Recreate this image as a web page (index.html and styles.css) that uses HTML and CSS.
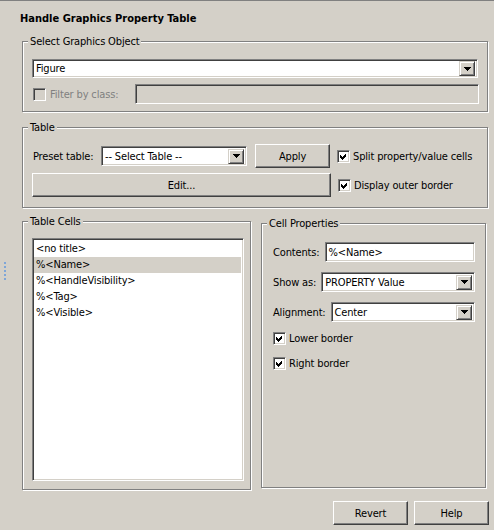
FILE: index.html
```html
<!DOCTYPE html>
<html>
<head>
<meta charset="utf-8">
<link rel="stylesheet" href="styles.css">
</head>
<body>
<div class="window">
  <div class="grip"><i></i><i></i><i></i><i></i><i></i></div>
  <div class="title">Handle Graphics Property Table</div>

  <fieldset class="group g-object">
    <legend>Select Graphics Object</legend>
    <div class="combo wide"><span class="val">Figure</span><span class="drop"><svg width="7" height="4" viewBox="0 0 7 4"><polygon points="0,0 7,0 3.5,4" fill="#000"/></svg></span></div>
    <div class="filter-row">
      <span class="check disabled"></span>
      <span class="lbl dis">Filter by class:</span>
      <span class="field disabled-field"></span>
    </div>
  </fieldset>

  <fieldset class="group g-table">
    <legend>Table</legend>
    <div class="trow">
      <span class="lbl preset">Preset table:</span>
      <div class="combo preset-combo"><span class="val">-- Select Table --</span><span class="drop"><svg width="7" height="4" viewBox="0 0 7 4"><polygon points="0,0 7,0 3.5,4" fill="#000"/></svg></span></div>
      <button class="btn apply">Apply</button>
      <span class="check on"><svg width="9" height="9" viewBox="0 0 9 9"><polygon points="1,3 3,5 7,1 7,4 3,8 1,6" fill="#000"/></svg></span>
      <span class="lbl">Split property/value cells</span>
    </div>
    <div class="trow r2">
      <button class="btn edit">Edit...</button>
      <span class="check on"><svg width="9" height="9" viewBox="0 0 9 9"><polygon points="1,3 3,5 7,1 7,4 3,8 1,6" fill="#000"/></svg></span>
      <span class="lbl">Display outer border</span>
    </div>
  </fieldset>

  <div class="lower">
    <fieldset class="group g-cells">
      <legend>Table Cells</legend>
      <ul class="list">
        <li>&lt;no title&gt;</li>
        <li class="sel">%&lt;Name&gt;</li>
        <li>%&lt;HandleVisibility&gt;</li>
        <li>%&lt;Tag&gt;</li>
        <li>%&lt;Visible&gt;</li>
      </ul>
    </fieldset>

    <fieldset class="group g-props">
      <legend>Cell Properties</legend>
      <div class="prow">
        <span class="lbl">Contents:</span>
        <span class="field"><span class="val">%&lt;Name&gt;</span></span>
      </div>
      <div class="prow">
        <span class="lbl">Show as:</span>
        <div class="combo"><span class="val">PROPERTY Value</span><span class="drop"><svg width="7" height="4" viewBox="0 0 7 4"><polygon points="0,0 7,0 3.5,4" fill="#000"/></svg></span></div>
      </div>
      <div class="prow">
        <span class="lbl">Alignment:</span>
        <div class="combo"><span class="val">Center</span><span class="drop"><svg width="7" height="4" viewBox="0 0 7 4"><polygon points="0,0 7,0 3.5,4" fill="#000"/></svg></span></div>
      </div>
      <div class="crow first">
        <span class="check on"><svg width="9" height="9" viewBox="0 0 9 9"><polygon points="1,3 3,5 7,1 7,4 3,8 1,6" fill="#000"/></svg></span>
        <span class="lbl">Lower border</span>
      </div>
      <div class="crow">
        <span class="check on"><svg width="9" height="9" viewBox="0 0 9 9"><polygon points="1,3 3,5 7,1 7,4 3,8 1,6" fill="#000"/></svg></span>
        <span class="lbl">Right border</span>
      </div>
    </fieldset>
  </div>

  <div class="buttons">
    <button class="btn">Revert</button>
    <button class="btn">Help</button>
  </div>
</div>
</body>
</html>
```

FILE: styles.css
```css
html, body {
  margin: 0;
  padding: 0;
  background: #d4d0c8;
}
body {
  font-family: "DejaVu Sans Condensed", "Liberation Sans", Arial, sans-serif;
  font-size: 11px;
  line-height: 13px;
  letter-spacing: -0.15px;
  color: #000;
}
.window {
  position: relative;
  width: 494px;
  height: 530px;
  box-sizing: border-box;
  border-top: 1px solid #808080;
  padding: 0 6px 0 22px;
  display: flex;
  flex-direction: column;
  overflow: hidden;
}
.grip {
  position: absolute;
  left: 4px;
  top: 261px;
  display: flex;
  flex-direction: column;
  gap: 2px;
}
.grip i {
  display: block;
  width: 2px;
  height: 2px;
  background: #7fa6d8;
}
.title {
  margin: 11px 0 0 -2px;
  font-weight: bold;
  letter-spacing: 0;
  height: 13px;
}
.group {
  margin: 0;
  padding: 0;
  border: 1px solid #808080;
  box-shadow: inset 1px 1px 0 #fff, 1px 1px 0 #fff;
  min-width: 0;
}
.group legend {
  padding: 0 2px;
  margin-left: -4px;
  background: #d4d0c8;
  line-height: 13px;
  height: 13px;
}
.g-object {
  margin-top: 10px;
  padding: 11px 9px 7px 9px;
}
.combo, .field {
  box-sizing: border-box;
  height: 19px;
  border: 1px solid;
  border-color: #808080 #fff #fff #808080;
  box-shadow: inset 1px 1px 0 #404040, inset -1px -1px 0 #d4d0c8;
  background: #fff;
  display: flex;
  align-items: center;
  padding: 2px;
}
.combo .val, .field .val {
  flex: 1;
  padding-left: 1px;
  white-space: nowrap;
  overflow: hidden;
}
.drop {
  box-sizing: border-box;
  width: 16px;
  height: 15px;
  background: #d4d0c8;
  border: 1px solid;
  border-color: #d4d0c8 #404040 #404040 #d4d0c8;
  box-shadow: inset 1px 1px 0 #fff, inset -1px -1px 0 #808080;
  display: flex;
  align-items: center;
  justify-content: center;
}
.drop svg { display: block; shape-rendering: crispEdges; }
.filter-row {
  margin-top: 6px;
  display: flex;
  align-items: center;
  height: 20px;
}
.filter-row .check { margin-left: 1px; }
.filter-row .lbl { margin-left: 4px; width: 85px; }
.dis { color: #808080; }
.disabled-field {
  flex: 1;
  height: 20px;
  background: #d4d0c8;
  margin-right: -1px;
}
.check {
  box-sizing: border-box;
  flex: none;
  width: 13px;
  height: 13px;
  border: 1px solid;
  border-color: #808080 #fff #fff #808080;
  box-shadow: inset 1px 1px 0 #404040, inset -1px -1px 0 #d4d0c8;
  background: #fff;
  display: flex;
  align-items: center;
  justify-content: center;
}
.check.disabled { background: #d4d0c8; }
.check svg { display: block; shape-rendering: crispEdges; }
.g-table {
  margin-top: 9px;
  padding: 10px 9px 10px 9px;
}
.trow {
  display: flex;
  align-items: center;
  height: 24px;
}
.trow.r2 { margin-top: 5px; }
.preset { margin-left: 1px; width: 68px; }
.preset-combo {
  width: 146px;
  height: 20px;
}
.btn {
  box-sizing: border-box;
  width: 75px;
  height: 24px;
  font: inherit;
  letter-spacing: inherit;
  color: #000;
  background: #d4d0c8;
  border: 1px solid;
  border-color: #fff #404040 #404040 #fff;
  box-shadow: inset -1px -1px 0 #808080;
  padding: 0;
  margin: 0;
}
.apply { margin-left: 8px; }
.edit { width: 299px; }
.trow .check { margin-left: 7px; }
.trow .check + .lbl { margin-left: 3px; }
.lower {
  margin-top: 7px;
  display: flex;
  align-items: flex-start;
}
.g-cells {
  width: 229px;
  box-sizing: border-box;
  padding: 10px 0 8px 9px;
}
.list {
  list-style: none;
  margin: 0;
  padding: 2px 0 0 0;
  box-sizing: border-box;
  width: 212px;
  height: 243px;
  border: 1px solid;
  border-color: #808080 #fff #fff #808080;
  box-shadow: inset 1px 1px 0 #404040, inset -1px -1px 0 #d4d0c8;
  background: #fff;
}
.list li {
  height: 16px;
  line-height: 16px;
  margin: 0 2px 0 1px;
  padding-left: 2px;
}
.list li.sel { background: #d4d0c8; }
.g-props {
  margin: 2px 0 0 10px;
  width: 225px;
  box-sizing: border-box;
  padding: 12px 10px 0 11px;
  height: 271px;
}
.g-props legend { margin-left: -6px; }
.prow {
  display: flex;
  align-items: center;
  gap: 5px;
  height: 20px;
  margin-bottom: 10px;
}
.prow .combo, .prow .field {
  flex: 1;
  height: 20px;
}
.crow {
  display: flex;
  align-items: center;
  height: 13px;
  margin-bottom: 12px;
}
.crow.first { margin-top: 6px; }
.crow .check { margin-left: 0; }
.crow .lbl { margin-left: 3px; }
.buttons {
  margin-top: 11px;
  display: flex;
  justify-content: flex-end;
  gap: 6px;
  margin-right: -1px;
}
```
